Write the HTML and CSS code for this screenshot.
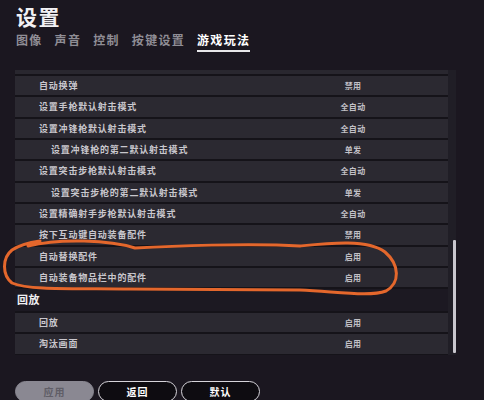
FILE: index.html
```html
<!DOCTYPE html>
<html lang="zh-CN">
<head>
<meta charset="utf-8">
<title>设置</title>
<link rel="stylesheet" href="styles.css">
</head>
<body>
<div class="page">
  <header class="header">
    <div class="title">设置</div>
    <nav class="tabs">
      <span class="tab">图像</span>
      <span class="tab">声音</span>
      <span class="tab">控制</span>
      <span class="tab">按键设置</span>
      <span class="tab active">游戏玩法</span>
    </nav>
  </header>

  <div class="scroll">
    <div class="list">
      <div class="strip"></div>
      <div class="row"><span class="label">自动换弹</span><span class="value">禁用</span></div>
      <div class="row"><span class="label">设置手枪默认射击模式</span><span class="value">全自动</span></div>
      <div class="row"><span class="label">设置冲锋枪默认射击模式</span><span class="value">全自动</span></div>
      <div class="row sub"><span class="label">设置冲锋枪的第二默认射击模式</span><span class="value">单发</span></div>
      <div class="row"><span class="label">设置突击步枪默认射击模式</span><span class="value">全自动</span></div>
      <div class="row sub"><span class="label">设置突击步枪的第二默认射击模式</span><span class="value">单发</span></div>
      <div class="row"><span class="label">设置精确射手步枪默认射击模式</span><span class="value">全自动</span></div>
      <div class="row"><span class="label">按下互动键自动装备配件</span><span class="value">禁用</span></div>
      <div class="row"><span class="label">自动替换配件</span><span class="value">启用</span></div>
      <div class="row"><span class="label">自动装备物品栏中的配件</span><span class="value">启用</span></div>
      <div class="section">回放</div>
      <div class="row"><span class="label">回放</span><span class="value">启用</span></div>
      <div class="row"><span class="label">淘汰画面</span><span class="value">启用</span></div>
    </div>
    <div class="track"><div class="thumb"></div></div>
  </div>

  <div class="buttons">
    <button class="btn disabled">应用</button>
    <button class="btn">返回</button>
    <button class="btn">默认</button>
  </div>

  <svg class="mark" width="484" height="400" viewBox="0 0 484 400" aria-hidden="true">
    <path d="M 28 246 C 60 238, 110 240, 135 248 C 170 246, 250 243, 300 246 C 330 243, 368 239, 385 252 C 400 265, 400 283, 386 291 C 370 297, 340 292, 300 290 L 130 289 C 80 288, 30 291, 12 283 C 2 275, 2 258, 12 250 C 18 246, 26 243, 40 241" fill="none" stroke="#e4672c" stroke-width="3" stroke-linecap="round" stroke-linejoin="round"/>
  </svg>
</div>
</body>
</html>
```

FILE: styles.css
```css
* { box-sizing: border-box; }

html, body {
  margin: 0;
  padding: 0;
  width: 484px;
  height: 400px;
  overflow: hidden;
  background: #1b1720;
  font-family: "Noto Sans CJK SC", "Noto Sans", sans-serif;
}

.page {
  position: relative;
  width: 484px;
  height: 400px;
}

.header {
  padding: 4px 16px 0;
}

.title {
  font-size: 21px;
  line-height: 24px;
  font-weight: 700;
  color: #f2f1f4;
  letter-spacing: 1.5px;
}

.tabs {
  display: flex;
  gap: 12px;
  margin-top: 4px;
}

.tab {
  font-size: 12px;
  line-height: 16px;
  font-weight: 700;
  letter-spacing: 1.3px;
  color: #8f8d95;
  padding-bottom: 2px;
  border-bottom: 2px solid transparent;
}

.tab.active {
  color: #ffffff;
  border-bottom-color: #e8e7ea;
}

.scroll {
  display: flex;
  margin-top: 18px;
  margin-left: 15px;
  height: 285px;
}

.list {
  width: 433px;
  background: #151319;
  display: flex;
  flex-direction: column;
}

.strip {
  height: 4px;
  background: #29272f;
  flex: none;
}

.row {
  flex: none;
  height: 19.33px;
  margin-top: 2px;
  background: #2b2931;
  display: flex;
  align-items: center;
}

.label {
  width: 300px;
  padding-left: 24px;
  font-size: 9px;
  font-weight: 700;
  letter-spacing: 0.8px;
  color: #c9c7cd;
  white-space: nowrap;
}

.row.sub .label {
  padding-left: 36px;
}

.value {
  width: 76px;
  text-align: center;
  font-size: 8px;
  font-weight: 700;
  letter-spacing: 0.3px;
  color: #c2c0c6;
}

.section {
  flex: none;
  height: 21.7px;
  margin-top: 2px;
  background: #1c1922;
  padding-left: 2px;
  font-size: 11px;
  line-height: 20px;
  font-weight: 700;
  color: #f0eff2;
  letter-spacing: 0.5px;
}

.track {
  width: 8px;
  background: #201e26;
  display: flex;
  flex-direction: column;
}

.thumb {
  width: 3px;
  height: 113px;
  margin-top: 170px;
  margin-left: 5px;
  background: #c9c7ce;
  border-radius: 1px;
}

.buttons {
  display: flex;
  gap: 4px;
  margin-left: 15px;
  margin-top: 26px;
}

.btn {
  width: 79px;
  height: 21px;
  border-radius: 11px;
  border: 1.5px solid #d6d4da;
  background: #0e0c11;
  color: #ffffff;
  font-family: "Noto Sans CJK SC", "Noto Sans", sans-serif;
  font-size: 10px;
  font-weight: 700;
  letter-spacing: 1px;
  padding: 0;
}

.btn.disabled {
  background: #8a8892;
  border-color: #8a8892;
  color: #605e67;
}

.mark {
  position: absolute;
  top: 0;
  left: 0;
  pointer-events: none;
}
```
